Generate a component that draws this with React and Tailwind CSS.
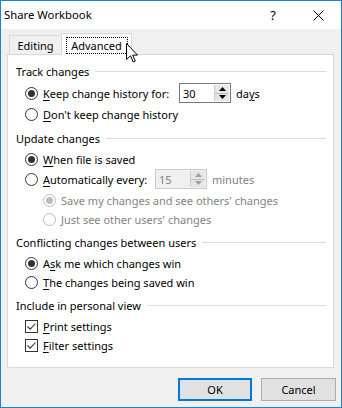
import React from "react";

const U = ({ children }) => <span className="underline underline-offset-[2px] decoration-[1px]">{children}</span>;

function Radio({ checked, disabled }) {
  const c = disabled ? "border-[#bcbcbc]" : "border-[#333333]";
  const d = disabled ? "bg-[#bcbcbc]" : "bg-[#333333]";
  return (
    <span className={`w-[13px] h-[13px] rounded-full border ${c} bg-white flex items-center justify-center shrink-0`}>
      {checked && <span className={`w-[7px] h-[7px] rounded-full ${d}`} />}
    </span>
  );
}

function Check() {
  return (
    <span className="w-[13px] h-[13px] border border-[#333333] bg-white flex items-center justify-center shrink-0">
      <svg width="11" height="11" viewBox="0 0 11 11">
        <polyline points="1.5,5.5 4.2,8.2 9.5,2.5" fill="none" stroke="#333333" strokeWidth="1.1" />
      </svg>
    </span>
  );
}

function Spinner({ value, disabled }) {
  const border = disabled ? "border-[#cccccc]" : "border-[#7a7a7a]";
  const bg = disabled ? "bg-[#f0f0f0]" : "bg-white";
  const txt = disabled ? "text-[#838383]" : "text-black";
  const arrow = disabled ? "#a0a0a0" : "#000000";
  return (
    <div className={`w-[52px] h-[20px] border ${border} ${bg} flex items-stretch shrink-0`}>
      <div className={`flex-1 flex items-center pl-[3px] ${txt}`}>{value}</div>
      <div className="w-[15px] flex flex-col my-[1px] mr-[1px] border-l border-[#cccccc]">
        <div className="flex-1 bg-[#e6e6e6] flex items-center justify-center border-b border-[#bdbdbd]">
          <svg width="7" height="4" viewBox="0 0 7 4"><polygon points="0,4 7,4 3.5,0" fill={arrow} /></svg>
        </div>
        <div className="flex-1 bg-[#e6e6e6] flex items-center justify-center">
          <svg width="7" height="4" viewBox="0 0 7 4"><polygon points="0,0 7,0 3.5,4" fill={arrow} /></svg>
        </div>
      </div>
    </div>
  );
}

function Header({ children, mt }) {
  return (
    <div className={`h-[19px] flex items-center ${mt}`}>
      <span className="whitespace-nowrap">{children}</span>
      <span className="flex-1 h-px bg-[#dcdcdc] ml-[6px] -mt-[1px]" />
    </div>
  );
}

export default function App() {
  return (
    <div className="w-[342px] h-[408px] bg-[#f0f0f0] border border-[#1883d7] flex flex-col relative text-[11px] text-black font-['Noto_Sans','Liberation_Sans',sans-serif] leading-none overflow-hidden whitespace-nowrap">
      {/* Title bar */}
      <div className="h-[28px] bg-white flex items-center pl-[3px] shrink-0">
        <span className="text-[11.3px]">Share Workbook</span>
        <span className="ml-auto mr-[37px] text-[13px]">?</span>
        <svg className="mr-[17px]" width="11" height="11" viewBox="0 0 11 11">
          <path d="M0.5 0.5 L10.5 10.5 M10.5 0.5 L0.5 10.5" stroke="#000" strokeWidth="1" />
        </svg>
      </div>

      {/* Tabs + panel */}
      <div className="ml-[6px] mt-[4px] flex flex-col">
        <div className="h-[22px] flex items-end pl-[2px]">
          <div className="w-[52px] h-[20px] border-t border-l border-[#d9d9d9] bg-[#f0f0f0] flex items-center justify-center pb-[1px]">
            Editing
          </div>
          <div className="w-[71px] h-[22px] border-t border-x border-[#d9d9d9] bg-white relative z-10 flex items-start justify-center pt-[3px]">
            <span className="border border-dotted border-black w-[62px] h-[17px] flex items-center justify-center pb-[1px]">Advanced</span>
          </div>
        </div>
        <div className="w-[327px] h-[314px] -mt-[1px] bg-white border border-[#d9d9d9] pl-[8px] pr-[7px] pt-[7px] flex flex-col">
          <Header mt="mt-0">Track changes</Header>
          <div className="h-[20px] mt-[2px] ml-[9px] flex items-center">
            <Radio checked />
            <span className="w-[141px] pl-[5px]"><U>K</U>eep change history for:</span>
            <Spinner value="30" />
            <span className="ml-[5px]">da<U>y</U>s</span>
          </div>
          <div className="h-[19px] mt-[2px] ml-[9px] flex items-center">
            <Radio />
            <span className="pl-[5px]"><U>D</U>on't keep change history</span>
          </div>
          <Header mt="mt-[5px]">Update changes</Header>
          <div className="h-[19px] mt-[2px] ml-[9px] flex items-center">
            <Radio checked />
            <span className="pl-[5px]"><U>W</U>hen file is saved</span>
          </div>
          <div className="h-[20px] ml-[9px] flex items-center">
            <Radio />
            <span className="w-[117px] pl-[5px]"><U>A</U>utomatically every:</span>
            <Spinner value="15" disabled />
            <span className="ml-[5px] text-[#838383]">minutes</span>
          </div>
          <div className="h-[19px] mt-[2px] ml-[27px] flex items-center text-[#838383]">
            <Radio checked disabled />
            <span className="pl-[5px]">Save my changes and see others' changes</span>
          </div>
          <div className="h-[19px] ml-[27px] flex items-center text-[#838383]">
            <Radio disabled />
            <span className="pl-[5px]">Just see other users' changes</span>
          </div>
          <Header mt="mt-[4px]">Conflicting changes between users</Header>
          <div className="h-[19px] mt-[2px] ml-[9px] flex items-center">
            <Radio checked />
            <span className="pl-[5px]">A<U>s</U>k me which changes win</span>
          </div>
          <div className="h-[19px] ml-[9px] flex items-center">
            <Radio />
            <span className="pl-[5px]"><U>T</U>he changes being saved win</span>
          </div>
          <Header mt="mt-[4px]">Include in personal view</Header>
          <div className="h-[19px] mt-[2px] ml-[9px] flex items-center">
            <Check />
            <span className="pl-[5px]"><U>P</U>rint settings</span>
          </div>
          <div className="h-[19px] ml-[9px] flex items-center">
            <Check />
            <span className="pl-[5px]"><U>F</U>ilter settings</span>
          </div>
        </div>
      </div>

      {/* Buttons */}
      <div className="mt-[10px] flex justify-end gap-[9px] pr-[5px]">
        <div className="w-[74px] h-[23px] border-2 border-[#0078d7] bg-[#e1e1e1] flex items-center justify-center">OK</div>
        <div className="w-[75px] h-[23px] border border-[#adadad] bg-[#e1e1e1] flex items-center justify-center">Cancel</div>
      </div>

      {/* Mouse cursor */}
      <svg className="absolute left-[125px] top-[42px] z-20" width="13" height="21" viewBox="0 0 13 21">
        <path d="M0.5 0.5 L0.5 16.5 L4.5 12.8 L7.2 19 L9.3 18.1 L6.7 12.1 L11.5 12.1 Z" fill="#ffffff" stroke="#000000" strokeWidth="1" strokeLinejoin="miter" />
      </svg>
    </div>
  );
}
